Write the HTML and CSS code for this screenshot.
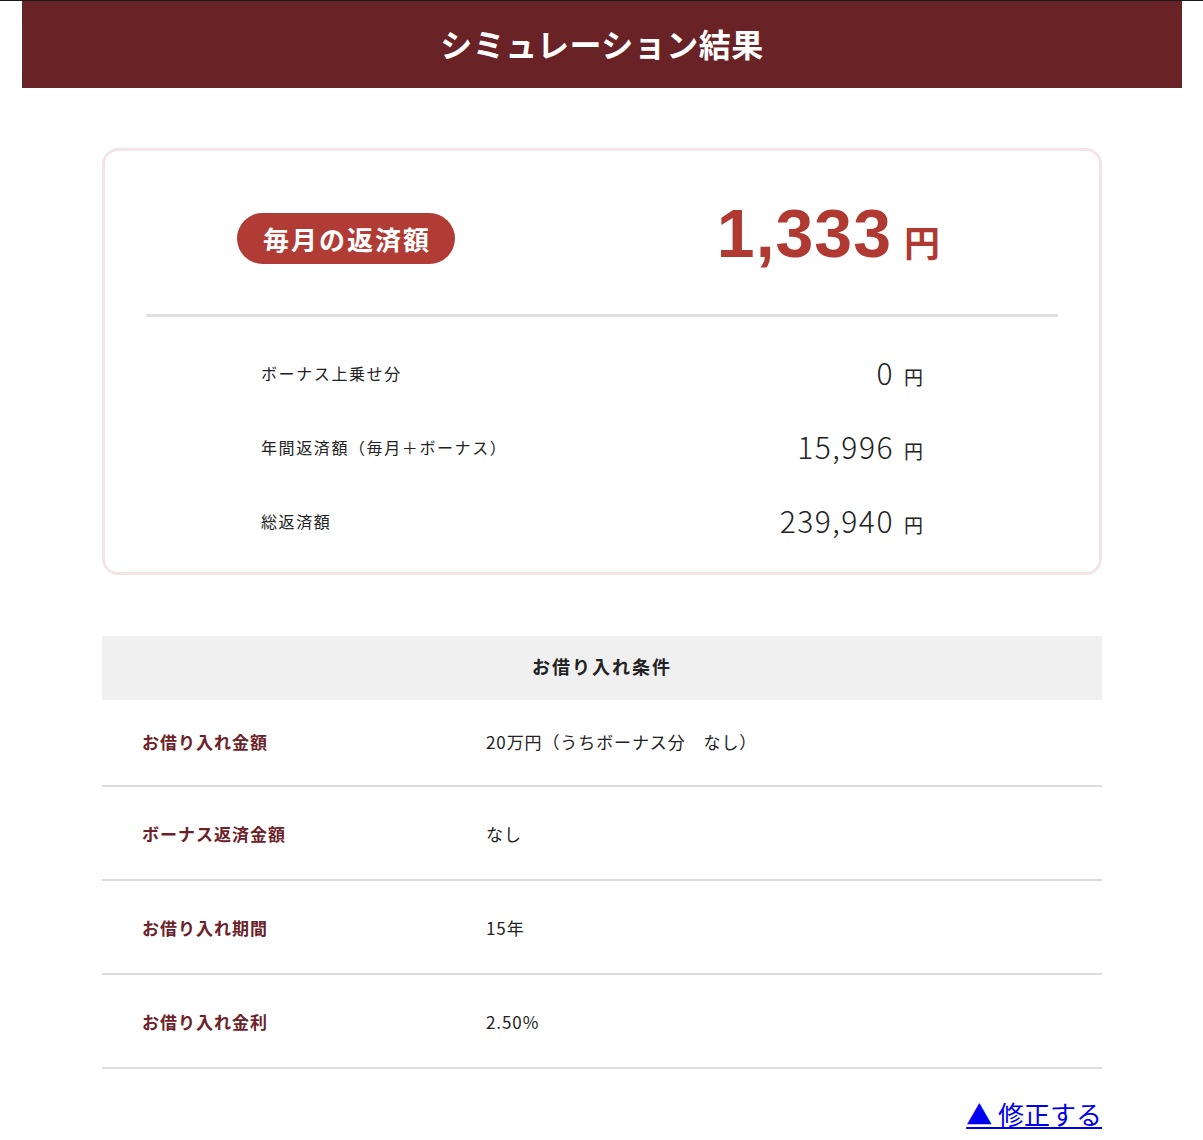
FILE: index.html
```html
<!DOCTYPE html>
<html lang="ja">
<head>
  <meta charset="UTF-8" />
  <meta name="viewport" content="width=device-width, initial-scale=1.0" />
  <title>シミュレーション結果</title>
  <link rel="stylesheet" href="styles.css">
</head>
<body>
  <header class="page-title">
    <h1>シミュレーション結果</h1>
  </header>

  <main class="container">
    <section class="result-card">
      <div class="monthly">
        <span class="badge">毎月の返済額</span>
        <p class="monthly-amount"><span class="num">1,333</span><span class="yen">円</span></p>
      </div>
      <div class="breakdown">
        <div class="row">
          <span class="label">ボーナス上乗せ分</span>
          <span class="value"><span class="num">0</span><span class="yen">円</span></span>
        </div>
        <div class="row">
          <span class="label">年間返済額（毎月＋ボーナス）</span>
          <span class="value"><span class="num">15,996</span><span class="yen">円</span></span>
        </div>
        <div class="row">
          <span class="label">総返済額</span>
          <span class="value"><span class="num">239,940</span><span class="yen">円</span></span>
        </div>
      </div>
    </section>

    <section class="conditions">
      <h2>お借り入れ条件</h2>
      <dl>
        <div class="cond-row first">
          <dt>お借り入れ金額</dt>
          <dd>20万円（うちボーナス分　なし）</dd>
        </div>
        <div class="cond-row">
          <dt>ボーナス返済金額</dt>
          <dd>なし</dd>
        </div>
        <div class="cond-row">
          <dt>お借り入れ期間</dt>
          <dd>15年</dd>
        </div>
        <div class="cond-row">
          <dt>お借り入れ金利</dt>
          <dd>2.50%</dd>
        </div>
      </dl>
    </section>

    <p class="back"><a href="#">▲ 修正する</a></p>
  </main>
</body>
</html>
```

FILE: styles.css
```css
body {
  margin: 0;
  border-top: 1px solid #1a1a1a;
  font-family: "Noto Sans CJK JP", "Noto Sans", sans-serif;
  color: #222;
  background: #fff;
}
.page-title {
  margin: 0 21px 0 22px;
  background-color: #692226;
  height: 87px;
  display: flex;
  align-items: center;
  justify-content: center;
}
.page-title h1 {
  margin: 0 0 4px;
  color: #fff;
  font-size: 32px;
  font-weight: bold;
  letter-spacing: 0.5px;
}
.container {
  width: 1000px;
  margin: 0 auto;
  padding-left: 1px;
}
.result-card {
  margin-top: 60px;
  border: 3px solid #f3e4e8;
  border-radius: 16px;
  padding: 0 41px;
}
.monthly {
  height: 163px;
  display: flex;
  align-items: center;
  justify-content: space-between;
  padding: 0 118px 0 91px;
  border-bottom: 3px solid #e0e0e0;
}
.badge {
  display: inline-block;
  background-color: #b03c35;
  color: #fff;
  font-size: 26px;
  font-weight: bold;
  line-height: 51px;
  padding: 0 24px 0 26px;
  letter-spacing: 2px;
  border-radius: 26px;
  margin-top: 12px;
}
.monthly-amount {
  margin: 0;
  color: #b03a32;
  font-weight: bold;
  display: flex;
  align-items: baseline;
}
.monthly-amount .num {
  font-family: "Liberation Sans", Arial, sans-serif;
  font-size: 68px;
  letter-spacing: 1px;
}
.monthly-amount .yen {
  font-size: 36px;
  margin-left: 12px;
}
.breakdown {
  padding: 19px 135px 14px 115px;
}
.row {
  height: 74px;
  display: flex;
  align-items: center;
  justify-content: space-between;
}
.row .label {
  font-size: 16px;
  letter-spacing: 1.6px;
}
.row .value {
  display: flex;
  align-items: baseline;
}
.row .num {
  font-size: 30px;
  font-weight: 300;
  letter-spacing: 1.5px;
  margin-top: -3px;
}
.row .yen {
  font-size: 19px;
  margin-left: 10px;
}
.conditions {
  margin-top: 61px;
}
.conditions h2 {
  margin: 0;
  height: 64px;
  line-height: 60px;
  background: #f0f0f0;
  text-align: center;
  font-size: 18px;
  letter-spacing: 2px;
  font-weight: bold;
}
.conditions dl {
  margin: 0;
}
.cond-row {
  display: flex;
  align-items: center;
  height: 92px;
  border-bottom: 2px solid #dddddd;
  font-size: 17px;
}
.cond-row.first {
  height: 83px;
  padding-bottom: 2px;
}
.cond-row dt {
  width: 344px;
  padding-left: 40px;
  font-weight: bold;
  color: #6b2228;
  letter-spacing: 1px;
}
.cond-row dd {
  margin: 0;
  letter-spacing: 0.9px;
}
.back {
  margin: 26px 0 0;
  text-align: right;
  font-size: 26px;
}
.back a {
  color: #0000ee;
}
```
